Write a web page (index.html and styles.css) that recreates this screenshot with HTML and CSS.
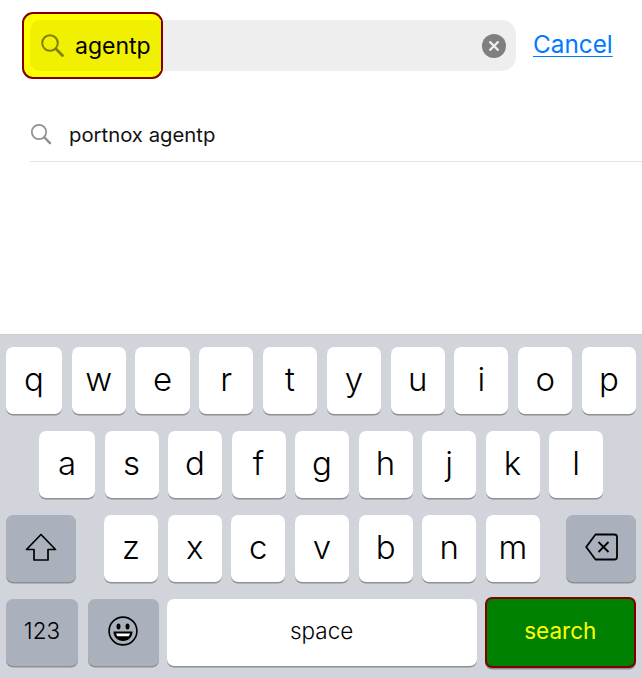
FILE: index.html
```html
<!DOCTYPE html>
<html lang="en">

<head>
    <meta charset="UTF-8">
    <meta name="viewport" content="width=device-width, initial-scale=1.0">
    <title>Search</title>
    <link rel="stylesheet" href="styles.css">
</head>

<body>

    <div class="screen">
        <div class="results">
            <!-- Search bar -->
            <div class="search-bar">
                <div class="field">
                    <div class="field-highlight"></div>
                    <svg class="field-icon" width="26" height="26" viewBox="0 0 26 26" fill="none">
                        <circle cx="10" cy="10" r="7.8" stroke="#7f7f00" stroke-width="2" />
                        <path d="M15.800 15.800l6.700 6.700" stroke="#7f7f00" stroke-width="2.800" stroke-linecap="round" />
                    </svg>
                    <span class="field-text">agentp</span>
                    <span class="clear-button">
                        <svg width="12" height="12" viewBox="0 0 12 12" fill="none">
                            <path d="M1.500 1.500l9 9M10.500 1.500l-9 9" stroke="#eee" stroke-width="2.400" />
                        </svg>
                    </span>
                </div>
                <a class="cancel" href="#">Cancel</a>
            </div>

            <!-- Suggestion -->
            <div class="suggestion">
                <svg width="22" height="22" viewBox="0 0 22 22" fill="none">
                    <circle cx="9" cy="9" r="7.200" stroke="#8e8e93" stroke-width="1.700" />
                    <path d="M14.500 14.500l5.500 5.700" stroke="#8e8e93" stroke-width="2.400" stroke-linecap="round" />
                </svg>
                <span>portnox agentp</span>
            </div>
        </div>

        <!-- Keyboard -->
        <div class="keyboard">
            <div class="row">
                <div class="key key-first">q</div>
                <div class="key">w</div>
                <div class="key">e</div>
                <div class="key">r</div>
                <div class="key">t</div>
                <div class="key">y</div>
                <div class="key">u</div>
                <div class="key">i</div>
                <div class="key">o</div>
                <div class="key">p</div>
            </div>
            <div class="row row-middle">
                <div class="key key-first">a</div>
                <div class="key">s</div>
                <div class="key">d</div>
                <div class="key">f</div>
                <div class="key">g</div>
                <div class="key">h</div>
                <div class="key">j</div>
                <div class="key">k</div>
                <div class="key">l</div>
            </div>
            <div class="row">
                <div class="key key-dark key-shift">
                    <svg width="32" height="28" viewBox="0 0 32 28" fill="none">
                        <path d="M16 1.500L1.500 16.500H9V27h14V16.500h7.500z" stroke="#000" stroke-width="1.700" stroke-linejoin="round" />
                    </svg>
                </div>
                <div class="letters">
                    <div class="key">z</div>
                    <div class="key">x</div>
                    <div class="key">c</div>
                    <div class="key">v</div>
                    <div class="key">b</div>
                    <div class="key">n</div>
                    <div class="key">m</div>
                </div>
                <div class="key key-dark key-delete">
                    <svg width="33" height="28" viewBox="0 0 33 28" fill="none">
                        <path d="M10.500 1.500h19a2.500 2.500 0 0 1 2.500 2.500v20a2.500 2.500 0 0 1-2.500 2.500h-19L1.200 14z" stroke="#000" stroke-width="1.800" stroke-linejoin="round" />
                        <path d="M13.500 9l10 10M23.500 9l-10 10" stroke="#000" stroke-width="1.800" />
                    </svg>
                </div>
            </div>
            <div class="row">
                <div class="key key-dark key-small key-123">123</div>
                <div class="key key-dark key-emoji">
                    <svg width="30" height="30" viewBox="0 0 30 30" fill="none">
                        <circle cx="15" cy="15" r="13.900" stroke="#000" stroke-width="1.600" />
                        <ellipse cx="10.500" cy="10.500" rx="2" ry="3" fill="#000" />
                        <ellipse cx="19.500" cy="10.500" rx="2" ry="3" fill="#000" />
                        <path d="M5.500 15.500h19c0 5.500-4 9.500-9.500 9.500s-9.500-4-9.500-9.500z" fill="#000" />
                        <path d="M8 17.500h14c-.5 1.500-1 2.200-1.500 2.700H9.500C9 19.700 8.500 19 8 17.500z" fill="#fff" />
                    </svg>
                </div>
                <div class="key key-small key-space">space</div>
                <div class="key key-small key-search">search</div>
            </div>
        </div>
    </div>

</body>

</html>
```

FILE: styles.css
```css
body {
    margin: 0;
    font-family: Inter, "Liberation Sans", sans-serif;
    background-color: #ffffff;
}

.screen {
    width: 642px;
    height: 678px;
    display: flex;
    flex-direction: column;
    overflow: hidden;
}

.results {
    height: 335px;
    box-sizing: border-box;
    padding: 20px 0 0 30px;
}

.search-bar {
    display: flex;
    align-items: center;
}

.field {
    position: relative;
    width: 486px;
    height: 51px;
    display: flex;
    align-items: center;
    padding: 0 10px 0 10px;
    box-sizing: border-box;
    background-color: #eeeeee;
    border-radius: 14px;
}

/* yellow marker box over the typed text */
.field-highlight {
    position: absolute;
    left: -8px;
    top: -8px;
    width: 141px;
    height: 67px;
    box-sizing: border-box;
    background-color: #ffff00;
    border: 2px solid #800000;
    border-radius: 11px;
}

.field-highlight::before {
    content: "";
    position: absolute;
    left: 6px;
    top: 6px;
    right: 0;
    bottom: 6px;
    background-color: #f0f000;
    border-radius: 10px 0 0 10px;
}

.field-icon {
    position: relative;
    flex-shrink: 0;
}

.field-text {
    position: relative;
    margin-left: 9px;
    font-size: 23px;
    color: #000000;
}

.clear-button {
    width: 24px;
    height: 24px;
    margin-left: auto;
    display: flex;
    align-items: center;
    justify-content: center;
    background-color: #7f7f7f;
    border-radius: 50%;
}

.cancel {
    margin-left: 17px;
    margin-bottom: 3px;
    font-size: 24.300px;
    color: #007aff;
    text-decoration: underline;
    text-decoration-thickness: 1px;
    text-underline-offset: 3px;
}

.suggestion {
    height: 54px;
    margin-top: 37px;
    display: flex;
    align-items: center;
    gap: 17px;
    padding-bottom: 1px;
    box-sizing: border-box;
    border-bottom: 1px solid #e3e3e5;
    font-size: 20.300px;
    color: #111111;
}

.keyboard {
    flex: 1;
    display: flex;
    flex-direction: column;
    gap: 17px;
    padding: 12px 6px;
    background-color: #d1d4db;
    border-top: 1px solid #c9ccd2;
    box-sizing: border-box;
}

.row {
    display: flex;
    gap: 9.600px;
    height: 67px;
}

.row-middle {
    padding: 0 33px;
}

.letters {
    flex: 1;
    display: flex;
    gap: 9.600px;
    margin: 0 26px 0 28px;
}

.key {
    flex: 1;
    display: flex;
    align-items: center;
    justify-content: center;
    padding-bottom: 4px;
    box-sizing: border-box;
    background-color: #ffffff;
    border-radius: 7px;
    box-shadow: 0 1.500px 0 #8d8f93;
    font-size: 33px;
    font-weight: 300;
    color: #000000;
}

.key-first {
    flex: 0 0 56px;
}

.key-dark {
    background-color: #abb1bc;
}

.key-shift {
    flex: 0 0 70px;
    margin-right: -9.600px;
}

.key-delete {
    flex: 0 0 70px;
    margin-left: -9.600px;
}

.key-small {
    font-size: 22.500px;
    font-weight: 300;
}

.key-123 {
    flex: 0 0 72px;
}

.key-emoji {
    flex: 0 0 71px;
}

.key-space {
    flex: 0 0 310px;
    margin: 0 -1.600px;
}

.key-search {
    flex: 1;
    background-color: #008000;
    border: 2px solid #800000;
    color: #ffff00;
    font-weight: 400;
    margin-top: -2px;
    height: 71px;
}
```
